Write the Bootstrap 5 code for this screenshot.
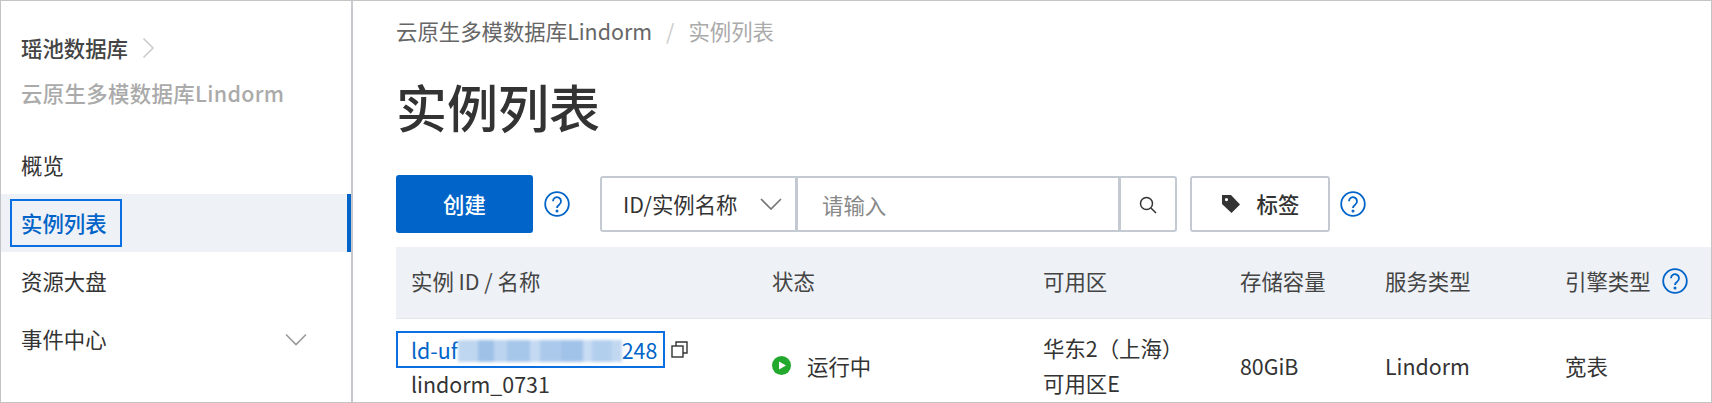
<!DOCTYPE html>
<html lang="zh-CN">
<head>
  <meta charset="UTF-8" />
  <title>实例列表</title>
  <link href="https://cdn.jsdelivr.net/npm/bootstrap@5.3.0/dist/css/bootstrap.min.css" rel="stylesheet"/>
  <style>
    html, body { height: 403px; overflow: hidden; }
    body {
      background: #fff;
      color: #333;
      font-family: "Noto Sans CJK SC", "Noto Sans", sans-serif;
      font-size: 21.4px;
      line-height: 32px;
    }
    .page-frame { height: 403px; border: 1px solid #c4c4c4; overflow: hidden; }
    .side-pane { width: 352px; flex: none; border-right: 2px solid #c6c9cd; padding-top: 29px; }
    .side-title { padding-left: 20px; height: 36px; line-height: 36px; font-weight: 500; color: #444; }
    .side-title svg { margin-left: 14px; }
    .side-sub { padding-left: 20px; margin-top: 9px; height: 36px; line-height: 36px; font-weight: 500; color: #aaa; letter-spacing: .35px; }
    .side-nav { margin-top: 25px; }
    .side-link { height: 58px; padding: 0 44px 0 20px; color: #333; }
    .side-link.is-on { background: #eef1f6; border-right: 4px solid #0064c8; color: #0064c8; font-weight: 500; padding-left: 9px; }
    .focus-box { border: 2px solid #0a6fe0; }
    .side-link .focus-box { padding: 6px 13px 6px 9px; line-height: 32px; }
    .main-pane { flex: 1; min-width: 0; padding: 14px 0 0 43px; }
    .crumbs { margin: 0; --bs-breadcrumb-margin-bottom: 0; --bs-breadcrumb-item-padding-x: 14px; --bs-breadcrumb-divider-color: #ccc; line-height: 32px; }
    .crumbs .breadcrumb-item { color: #666; }
    .crumbs .breadcrumb-item.active { color: #aaa; }
    .page-name { font-size: 51px; line-height: 72px; font-weight: 500; color: #333; margin: 23px 0 33px; }
    .tool-row { height: 58px; }
    .btn-create { width: 137px; height: 58px; background: #0064c8; border: 0; border-radius: 3px; color: #fff; font-size: 21.4px; font-weight: 500; }
    .help-mark { width: 26px; height: 26px; flex: none; }
    .help-first { margin-left: 11px; }
    .help-second { margin-left: 10px; }
    .search-group { width: 577px; height: 56px; margin-left: 30px; flex-wrap: nowrap; }
    .search-group .field-part { border: 2px solid #c4cad2; background: #fff; height: 56px; font-size: 21.4px; color: #333; border-radius: 3px; }
    .pick-part { width: 197px; flex: none; padding: 0 13px 0 21px; }
    .search-group input.field-part { flex: 1; min-width: 0; margin-left: -2px; padding: 0 20px 0 24px; box-shadow: none; }
    .search-group input::placeholder { color: #888; }
    .find-part { width: 58px; flex: none; margin-left: -2px; padding: 0 0 5px; }
    .btn-tag { width: 140px; height: 56px; margin-left: 13px; border: 2px solid #c4cad2; border-radius: 3px; background: #fff; color: #333; font-size: 21.4px; font-weight: 500; }
    .list-table { table-layout: fixed; width: 100%; margin: 14px 0 0; --bs-table-color: #333; --bs-table-border-color: #e3e6ea; }
    .list-table th { height: 71px; background: #eef1f6; color: #444; font-weight: 400; padding: 0 15px 2px; vertical-align: middle; border-bottom: 1px solid #e3e6ea; }
    .list-table td { padding: 0 15px; height: 94px; line-height: 35px; vertical-align: middle; border: 0; color: #333; }
    .list-table td.id-cell { padding: 12px 0 0; vertical-align: top; }
    .id-link { display: inline-block; width: 269px; height: 37px; line-height: 33px; padding-left: 13px; color: #0064c8; text-decoration: none; white-space: nowrap; overflow: hidden; }
    .id-blur { display: inline-block; width: 164px; height: 22px; vertical-align: -3px; filter: blur(1.5px); background: linear-gradient(90deg, #bfd6f0 0 12%, #9fc1e8 12% 22%, #bcd4ef 22% 30%, #a6c6ea 30% 44%, #c5daf2 44% 50%, #abc9eb 50% 63%, #a2c3e9 63% 76%, #c8dcf3 76% 82%, #b3cfee 82% 94%, #c2d8f1 94%); }
    .id-name { padding-left: 15px; line-height: 34px; margin-top: -1px; }
    .engine-head { gap: 11px; }
    .copy-mark { margin-left: 6px; }
  </style>
</head>
<body>
  <div class="page-frame d-flex">
    <aside class="side-pane">
      <div class="side-title d-flex align-items-center">瑶池数据库
        <svg width="13" height="22" viewBox="0 0 13 22" fill="none" stroke="#ccc" stroke-width="1.6"><path d="M1.5 1.5 11 11 1.5 20.5"/></svg>
      </div>
      <div class="side-sub">云原生多模数据库Lindorm</div>
      <nav class="side-nav nav flex-column">
        <a class="side-link d-flex align-items-center text-decoration-none" href="#">概览</a>
        <a class="side-link is-on d-flex align-items-center text-decoration-none" href="#"><span class="focus-box">实例列表</span></a>
        <a class="side-link d-flex align-items-center text-decoration-none" href="#">资源大盘</a>
        <a class="side-link d-flex align-items-center justify-content-between text-decoration-none" href="#">事件中心
          <svg width="22" height="13" viewBox="0 0 22 13" fill="none" stroke="#999" stroke-width="1.6"><path d="M1 1.5 11 11.5 21 1.5"/></svg>
        </a>
      </nav>
    </aside>

    <main class="main-pane">
      <ol class="breadcrumb crumbs">
        <li class="breadcrumb-item">云原生多模数据库Lindorm</li>
        <li class="breadcrumb-item active">实例列表</li>
      </ol>
      <h1 class="page-name">实例列表</h1>

      <div class="tool-row d-flex align-items-center">
        <button class="btn btn-create" type="button">创建</button>
        <svg class="help-mark help-first" viewBox="0 0 26 26" fill="none" stroke="#0064c8" stroke-width="1.8"><circle cx="13" cy="13" r="11.8"/><path d="M9 10.2a4 4 0 1 1 6.4 3.2c-1.5 1-2.4 1.7-2.4 3.6"/><circle cx="13" cy="20" r=".6" fill="#0064c8"/></svg>
        <div class="input-group search-group">
          <button class="field-part pick-part d-flex align-items-center justify-content-between" type="button">ID/实例名称
            <svg width="22" height="12" viewBox="0 0 22 12" fill="none" stroke="#777" stroke-width="1.7"><path d="M1 1 11 11 21 1"/></svg>
          </button>
          <input class="form-control field-part" type="text" placeholder="请输入" />
          <button class="field-part find-part" type="button" aria-label="搜索">
            <svg width="18" height="18" viewBox="0 0 18 18" fill="none" stroke="#333" stroke-width="1.5"><circle cx="7.5" cy="7.5" r="6"/><path d="m12 12 5 5"/></svg>
          </button>
        </div>
        <button class="btn-tag d-flex align-items-center justify-content-center gap-3" type="button">
          <svg width="20" height="20" viewBox="0 0 20 20"><path fill="#333" d="M1 1h9l9 9.5L10.5 19 1 10zM5.5 4A1.6 1.6 0 1 0 5.5 7.2 1.6 1.6 0 0 0 5.5 4z" fill-rule="evenodd"/></svg>
          标签
        </button>
        <svg class="help-mark help-second" viewBox="0 0 26 26" fill="none" stroke="#0064c8" stroke-width="1.8"><circle cx="13" cy="13" r="11.8"/><path d="M9 10.2a4 4 0 1 1 6.4 3.2c-1.5 1-2.4 1.7-2.4 3.6"/><circle cx="13" cy="20" r=".6" fill="#0064c8"/></svg>
      </div>

      <table class="table list-table">
        <colgroup>
          <col width="361"/><col width="271"/><col width="197"/><col width="145"/><col width="180"/><col/>
        </colgroup>
        <thead>
          <tr>
            <th>实例 ID / 名称</th>
            <th>状态</th>
            <th>可用区</th>
            <th>存储容量</th>
            <th>服务类型</th>
            <th>
              <span class="d-inline-flex align-items-center engine-head">引擎类型
                <svg class="help-mark" viewBox="0 0 26 26" fill="none" stroke="#0064c8" stroke-width="1.8"><circle cx="13" cy="13" r="11.8"/><path d="M9 10.2a4 4 0 1 1 6.4 3.2c-1.5 1-2.4 1.7-2.4 3.6"/><circle cx="13" cy="20" r=".6" fill="#0064c8"/></svg>
              </span>
            </th>
          </tr>
        </thead>
        <tbody>
          <tr>
            <td class="id-cell">
              <div class="d-flex align-items-center">
                <a class="id-link focus-box" href="#">ld-uf<span class="id-blur"></span>248</a>
                <svg class="copy-mark" width="17" height="17" viewBox="0 0 17 17" fill="none" stroke="#333" stroke-width="1.4"><rect x="1" y="5" width="11" height="11"/><path d="M5 5V1h11v11h-4"/></svg>
              </div>
              <div class="id-name">lindorm_0731</div>
            </td>
            <td>
              <span class="d-flex align-items-center gap-3">
                <svg width="19" height="19" viewBox="0 0 19 19"><circle cx="9.5" cy="9.5" r="9.5" fill="#22a82c"/><path fill="#fff" d="M7 5.5 14 9.5 7 13.5z"/></svg>
                运行中
              </span>
            </td>
            <td>华东2（上海）<br/>可用区E</td>
            <td>80GiB</td>
            <td>Lindorm</td>
            <td>宽表</td>
          </tr>
        </tbody>
      </table>
    </main>
  </div>
  <script src="https://cdn.jsdelivr.net/npm/bootstrap@5.3.0/dist/js/bootstrap.bundle.min.js"></script>
</body>
</html>
